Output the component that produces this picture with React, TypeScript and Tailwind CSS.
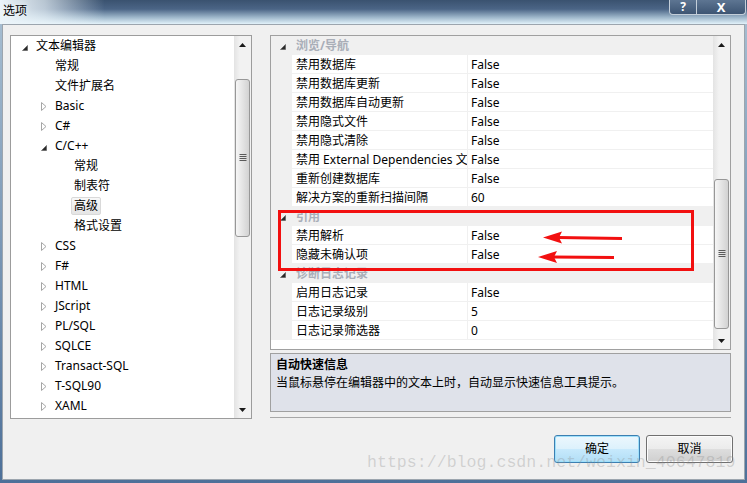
import React from "react";

type TreeNode = {
  label: string;
  level: 0 | 1 | 2;
  arrow?: "open" | "closed";
  selected?: boolean;
};

type GridRow = { cat: string } | { name: string; value: string };

const treeNodes: TreeNode[] = [
  { label: "文本编辑器", level: 0, arrow: "open" },
  { label: "常规", level: 1 },
  { label: "文件扩展名", level: 1 },
  { label: "Basic", level: 1, arrow: "closed" },
  { label: "C#", level: 1, arrow: "closed" },
  { label: "C/C++", level: 1, arrow: "open" },
  { label: "常规", level: 2 },
  { label: "制表符", level: 2 },
  { label: "高级", level: 2, selected: true },
  { label: "格式设置", level: 2 },
  { label: "CSS", level: 1, arrow: "closed" },
  { label: "F#", level: 1, arrow: "closed" },
  { label: "HTML", level: 1, arrow: "closed" },
  { label: "JScript", level: 1, arrow: "closed" },
  { label: "PL/SQL", level: 1, arrow: "closed" },
  { label: "SQLCE", level: 1, arrow: "closed" },
  { label: "Transact-SQL", level: 1, arrow: "closed" },
  { label: "T-SQL90", level: 1, arrow: "closed" },
  { label: "XAML", level: 1, arrow: "closed" },
];

const gridRows: GridRow[] = [
  { cat: "浏览/导航" },
  { name: "禁用数据库", value: "False" },
  { name: "禁用数据库更新", value: "False" },
  { name: "禁用数据库自动更新", value: "False" },
  { name: "禁用隐式文件", value: "False" },
  { name: "禁用隐式清除", value: "False" },
  { name: "禁用 External Dependencies 文件夹", value: "False" },
  { name: "重新创建数据库", value: "False" },
  { name: "解决方案的重新扫描间隔", value: "60" },
  { cat: "引用" },
  { name: "禁用解析", value: "False" },
  { name: "隐藏未确认项", value: "False" },
  { cat: "诊断日志记录" },
  { name: "启用日志记录", value: "False" },
  { name: "日志记录级别", value: "5" },
  { name: "日志记录筛选器", value: "0" },
];

const indent = ["w-0", "w-[19px]", "w-[38px]"];

// small filled triangle used by expanded nodes
const OpenArrow = () => (
  <svg width="6" height="6" viewBox="0 0 6 6" className="mt-[3px]">
    <polygon points="5.5,0.5 5.5,5.5 0.5,5.5" fill="#2a2a2a" stroke="#555" strokeWidth="0.6" />
  </svg>
);

const ClosedArrow = () => (
  <svg width="6" height="9" viewBox="0 0 6 9">
    <polygon points="0.5,0.5 5,4.5 0.5,8.5" fill="#fff" stroke="#a6a6a6" strokeWidth="1" />
  </svg>
);

const Gripper = () => (
  <svg width="8" height="8" viewBox="0 0 8 8">
    {[0.5, 2.5, 4.5, 6.5].map((y) => (
      <line key={y} x1="0.5" x2="7.5" y1={y} y2={y} stroke="#5a5a5a" strokeWidth="1" />
    ))}
  </svg>
);

function ScrollBar({ thumb }: { thumb: string }) {
  return (
    <div className="flex w-[17px] flex-col bg-[linear-gradient(to_right,#e3e3e3,#f2f2f2_35%,#f2f2f2)]">
      <div className="flex h-[17px] items-center justify-center">
        <svg width="7" height="4" viewBox="0 0 7 4">
          <polygon points="3.5,0 7,4 0,4" fill="#1a1a1a" />
        </svg>
      </div>
      <div className="flex-1">
        <div
          className={`${thumb} mx-[1px] flex items-center justify-center rounded-[3px] border border-[#979797] bg-[linear-gradient(to_right,#f6f6f6,#e4e4e4_50%,#d2d2d2)]`}
        >
          <Gripper />
        </div>
      </div>
      <div className="flex h-[17px] items-center justify-center">
        <svg width="7" height="4" viewBox="0 0 7 4">
          <polygon points="0,0 7,0 3.5,4" fill="#1a1a1a" />
        </svg>
      </div>
    </div>
  );
}

const Tree = () => (
  <div className="flex h-[384px] w-[242px] border border-[#9c9c9c] bg-white">
    <div className="flex flex-1 flex-col">
      {treeNodes.map((n, i) => (
        <div key={i} className="flex h-[20px] items-center whitespace-nowrap">
          <div className={indent[n.level]} />
          <div className="flex w-[25px] justify-end pr-[8px]">
            {n.arrow === "open" && <OpenArrow />}
            {n.arrow === "closed" && <ClosedArrow />}
          </div>
          {n.selected ? (
            <span className="-ml-[3px] flex h-[18px] items-center rounded-[2px] border border-[#d9d9d9] bg-[linear-gradient(to_bottom,#f8f8f8,#e5e5e5)] px-[2px]">
              {n.label}
            </span>
          ) : (
            <span>{n.label}</span>
          )}
        </div>
      ))}
    </div>
    <ScrollBar thumb="mt-[26px] h-[158px]" />
  </div>
);

const PropertyGrid = () => (
  <div className="flex h-[315px] border border-[#a0a0a0] bg-white">
    <div className="flex flex-1 flex-col">
      {gridRows.map((r, i) =>
        "cat" in r ? (
          <div key={i} className="flex h-[19px] items-center border-b border-[#f0f0f0] bg-[#f0f0f0] pt-px">
            <div className="flex w-[21px] pl-[9px]">
              <OpenArrow />
            </div>
            <span className="pl-[4px] font-bold text-[#a9aeb8]">{r.cat}</span>
          </div>
        ) : (
          <div key={i} className="flex h-[19px] border-b border-[#f0f0f0]">
            <div className="w-[21px] bg-[#f0f0f0]" />
            <div className="w-[176px] overflow-hidden whitespace-nowrap border-r border-[#f0f0f0] pl-[4px] pt-px leading-[18px]">
              {r.name}
            </div>
            <div className="flex-1 pl-[3px] pt-px leading-[18px]">{r.value}</div>
          </div>
        )
      )}
    </div>
    <ScrollBar thumb="mt-[126px] h-[150px]" />
  </div>
);

const Description = () => (
  <div className="mt-[3px] h-[59px] border border-[#a0a0a0] bg-[#dfe2ea] pl-[5px] pt-[2px]">
    <div className="font-bold">自动快速信息</div>
    <div>当鼠标悬停在编辑器中的文本上时，自动显示快速信息工具提示。</div>
  </div>
);

export default function App() {
  return (
    <div className="relative flex h-[483px] w-[747px] flex-col overflow-hidden bg-[linear-gradient(to_bottom,#a9c0d3,#4d7099)] font-['Noto_Sans','Noto_Sans_CJK_SC',sans-serif] text-[12px] leading-[18px] text-black">
      {/* title bar */}
      <div className="flex h-[24px] justify-between bg-[linear-gradient(to_right,rgba(236,245,250,1)_0%,rgba(236,245,250,0.7)_6%,rgba(236,245,250,0)_14%),linear-gradient(to_bottom,#3a526f_0%,#4b6586_38%,#9db6ca_72%,#e2f2fa_100%)]">
        <span className="pl-[3px] pt-px leading-[20px] [text-shadow:0_0_6px_#fff]">选项</span>
        <div className="mr-[1px] flex h-[15px]">
          <div className="flex w-[28px] items-center justify-center rounded-bl-[4px] border border-t-0 border-[#c3ced9] bg-[linear-gradient(to_bottom,#5d7592,#3d5573)] text-[12px] font-bold leading-none text-white">
            ?
          </div>
          <div className="flex w-[49px] items-center justify-center rounded-br-[4px] border border-l-0 border-t-0 border-[#c3ced9] bg-[linear-gradient(to_bottom,#5d7592,#3d5573)] text-[13px] font-bold leading-none text-white">
            X
          </div>
        </div>
      </div>

      {/* client area */}
      <div className="mx-[2px] mb-[3px] flex flex-1 flex-col border-x border-t border-b border-[#9ca5ae] bg-[#f0f0f0] pl-[7px] pt-[10px]">
        <div className="flex gap-[18px]">
          <Tree />
          <div className="flex w-[461px] flex-col">
            <PropertyGrid />
            <Description />
            <div className="mt-[5px] h-px bg-[#a7a7a7]" />
          </div>
        </div>

        <div className="mt-[16px] flex justify-end gap-[6px] pr-[11px]">
          <button className="h-[28px] w-[86px] rounded-[3px] border border-[#3c7fb1] bg-[linear-gradient(to_bottom,#ecf7fd_0%,#dcf1fc_50%,#c6e9fc_52%,#b2def6_100%)] shadow-[inset_0_0_0_1px_#9fe0fb]">
            确定
          </button>
          <button className="h-[28px] w-[87px] rounded-[3px] border border-[#707070] bg-[linear-gradient(to_bottom,#f4f4f4_0%,#ebebeb_50%,#dddddd_52%,#cfcfcf_100%)] shadow-[inset_0_0_0_1px_#fcfcfc]">
            取消
          </button>
        </div>
      </div>

      {/* annotations */}
      <div className="pointer-events-none absolute left-[278px] top-[210px] h-[61px] w-[416px] border-[3px] border-[#f21010]" />
      <svg className="pointer-events-none absolute left-[542px] top-[230px]" width="82" height="15" viewBox="0 0 82 15">
        <polygon points="1,7.5 20,1.5 17,7.5 20,13.5" fill="#f21010" />
        <line x1="16" y1="7.5" x2="80" y2="8.5" stroke="#f21010" strokeWidth="3" />
      </svg>
      <svg className="pointer-events-none absolute left-[537px] top-[249px]" width="80" height="16" viewBox="0 0 80 16">
        <polygon points="1,8 20,2 17,8 20,14" fill="#f21010" />
        <line x1="16" y1="8" x2="77" y2="8.5" stroke="#f21010" strokeWidth="3" />
      </svg>
      <div className="pointer-events-none absolute left-[367px] top-[452px] whitespace-nowrap font-['Liberation_Mono',monospace] text-[16.6px] leading-[22px] text-[rgba(140,140,140,0.32)]">
        https://blog.csdn.net/weixin_40647819
      </div>
    </div>
  );
}
